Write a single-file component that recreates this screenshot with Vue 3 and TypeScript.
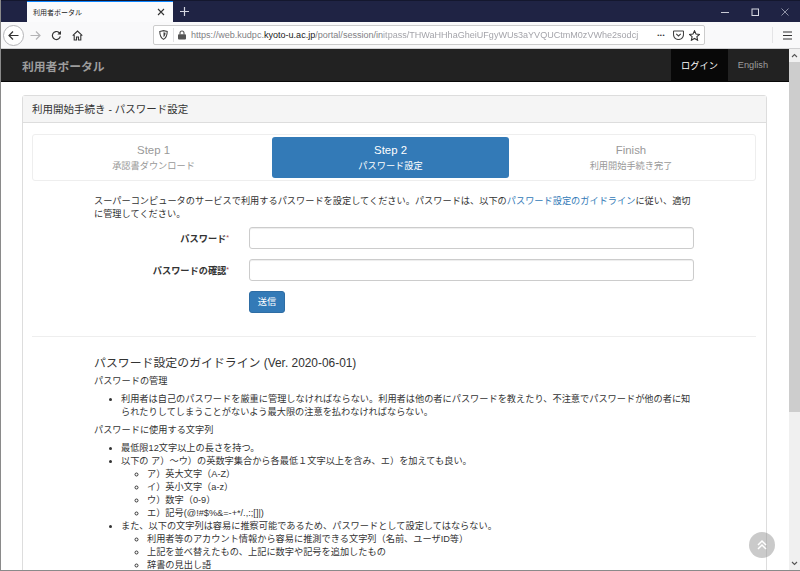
<script setup lang="ts">
const steps = [
  { title: "Step 1", sub: "承認書ダウンロード", active: false },
  { title: "Step 2", sub: "パスワード設定", active: true },
  { title: "Finish", sub: "利用開始手続き完了", active: false },
];
const symbols = ["ア）英大文字（A-Z）", "イ）英小文字（a-z）", "ウ）数字（0-9）", "エ）記号(@!#$%&=-+*/.,:;[]|)"];
const banned = [
  "利用者等のアカウント情報から容易に推測できる文字列（名前、ユーザID等）",
  "上記を並べ替えたもの、上記に数字や記号を追加したもの",
  "辞書の見出し語",
];
</script>

<template>
  <div class="window">
    <div class="titlebar">
      <div class="tab">
        <span class="tab-title">利用者ポータル</span>
        <svg class="tab-close" width="8" height="8" viewBox="0 0 8 8"><path d="M1 1l6 6M7 1L1 7" stroke="#333" stroke-width="1.1" /></svg>
      </div>
      <svg class="new-tab" width="9" height="9" viewBox="0 0 9 9"><path d="M4.500 0v9M0 4.500h9" stroke="#d4d6e0" stroke-width="1.2" /></svg>
      <div class="win-controls">
        <svg width="8" height="8" viewBox="0 0 8 8"><path d="M0 4.500h8" stroke="#c9cbd6" /></svg>
        <svg width="8" height="8" viewBox="0 0 8 8"><rect x="1" y="1" width="6.500" height="6.500" fill="none" stroke="#d8dae2" /></svg>
        <svg width="8" height="8" viewBox="0 0 8 8"><path d="M.5.5l7 7M7.500.5l-7 7" stroke="#8f92a6" /></svg>
      </div>
    </div>

    <div class="toolbar">
      <div class="back">
        <svg width="11" height="11" viewBox="0 0 11 11"><path d="M10.500 5.500H1M5 1.500l-4 4 4 4" fill="none" stroke="#333" stroke-width="1.2" /></svg>
      </div>
      <svg class="forward" width="11" height="11" viewBox="0 0 11 11"><path d="M.5 5.500H10M6 1.500l4 4-4 4" fill="none" stroke="#b4b4b6" stroke-width="1.2" /></svg>
      <svg width="11" height="11" viewBox="0 0 11 11"><path d="M9.300 6.300A4 4 0 1 1 8 2.500L9.500 4" fill="none" stroke="#333" stroke-width="1.2" /><path d="M10 .8v3.600H6.400z" fill="#333" /></svg>
      <svg width="11" height="11" viewBox="0 0 11 11"><path d="M.7 5.600 5.500 1l4.800 4.600M2.200 5v5h2.300V7h2v3h2.300V5" fill="none" stroke="#333" stroke-width="1.1" /></svg>
      <div class="urlbar">
        <svg class="shield" width="9" height="10" viewBox="0 0 9 10"><path d="M.8 1.500 4.500.6l3.700.9c0 3.400-.8 6.200-3.700 7.900C1.600 7.700.8 4.900.8 1.500z" fill="none" stroke="#444" stroke-width="1.100" /><path d="M4.500 2.200l2 .5c0 2-.5 3.400-2 4.500z" fill="#444" /></svg>
        <span class="url-sep"></span>
        <svg class="lock" width="8" height="10" viewBox="0 0 8 10"><path d="M2 4.500V3a2 2 0 0 1 4 0v1.500" fill="none" stroke="#555" stroke-width="1.100" /><rect y="4.200" width="8" height="5.300" rx="1" fill="#555" /></svg>
        <span class="url">https://web.kudpc.<b>kyoto-u.ac.jp</b>/portal/session/in</span>
        <span class="url-blur">itpass/THWaHHhaGheiUFgyWUs3aYVQUCtmM0zVWhe2sodcj</span>
        <span class="url-dots">•••</span>
        <svg width="11" height="10" viewBox="0 0 11 10"><path d="M1 1h9a.5.5 0 0 1 .5.5V4.500a5 5 0 0 1-10 0V1.500A.5.5 0 0 1 1 1z" fill="none" stroke="#444" stroke-width="1.100" /><path d="M3.200 3.800 5.500 6l2.300-2.200" fill="none" stroke="#444" stroke-width="1.100" /></svg>
        <svg width="11" height="11" viewBox="0 0 11 11"><path d="M5.500.8 7 4l3.500.4-2.600 2.300.7 3.500-3.100-1.800-3.100 1.800.7-3.500L.5 4.400 4 4z" fill="none" stroke="#333" stroke-width="1.100" /></svg>
      </div>
      <span class="tool-sep"></span>
      <svg class="menu" width="9" height="9" viewBox="0 0 9 9"><path d="M0 1h9M0 4.500h9M0 8h9" stroke="#333" stroke-width="1.200" /></svg>
    </div>

    <div class="viewport">
      <div class="page">
        <nav class="navbar">
          <span class="brand">利用者ポータル</span>
          <div class="nav-links">
            <span class="nav-link current">ログイン</span>
            <span class="nav-link">English</span>
          </div>
        </nav>

        <div class="panel">
          <div class="panel-heading">利用開始手続き - パスワード設定</div>
          <div class="panel-body">
            <div class="steps">
              <div v-for="step in steps" :key="step.title" class="step" :class="{ active: step.active }">
                <div class="step-title">{{ step.title }}</div>
                <div class="step-sub">{{ step.sub }}</div>
              </div>
            </div>

            <div class="narrow">
              <p class="intro">
                スーパーコンピュータのサービスで利用するパスワードを設定してください。パスワードは、以下の<a>パスワード設定のガイドライン</a>に従い、適切に管理してください。
              </p>
              <div class="form-row">
                <label>パスワード<i>*</i></label>
                <input type="password" />
              </div>
              <div class="form-row">
                <label>パスワードの確認<i>*</i></label>
                <input type="password" />
              </div>
              <div class="form-row">
                <span class="label-gap"></span>
                <button type="button">送信</button>
              </div>
            </div>

            <hr />

            <div class="narrow">
              <h3>パスワード設定のガイドライン (Ver. 2020-06-01)</h3>
              <p class="sub-head">パスワードの管理</p>
              <ul>
                <li>利用者は自己のパスワードを厳重に管理しなければならない。利用者は他の者にパスワードを教えたり、不注意でパスワードが他の者に知られたりしてしまうことがないよう最大限の注意を払わなければならない。</li>
              </ul>
              <p class="sub-head">パスワードに使用する文字列</p>
              <ul>
                <li>最低限12文字以上の長さを持つ。</li>
                <li>以下の ア）～ウ）の英数字集合から各最低１文字以上を含み、エ）を加えても良い。
                  <ul>
                    <li v-for="s in symbols" :key="s">{{ s }}</li>
                  </ul>
                </li>
                <li>また、以下の文字列は容易に推察可能であるため、パスワードとして設定してはならない。
                  <ul>
                    <li v-for="b in banned" :key="b">{{ b }}</li>
                  </ul>
                </li>
              </ul>
            </div>
          </div>
        </div>
      </div>

      <div class="to-top">
        <svg width="12" height="12" viewBox="0 0 12 12"><path d="M2 6 6 2l4 4M2 10l4-4 4 4" fill="none" stroke="#fff" stroke-width="1.500" /></svg>
      </div>

      <div class="scrollbar">
        <svg class="arrow" width="7" height="5" viewBox="0 0 7 5"><path d="M1 4l2.500-2.500L6 4" fill="none" stroke="#555" stroke-width="1.100" /></svg>
        <div class="thumb"></div>
        <svg class="arrow" width="7" height="5" viewBox="0 0 7 5"><path d="M1 1l2.500 2.500L6 1" fill="none" stroke="#555" stroke-width="1.100" /></svg>
      </div>
    </div>
  </div>
</template>

<style scoped>
.window {
  width: 800px;
  height: 571px;
  box-sizing: border-box;
  border-left: 1px solid #8a8a8a;
  border-bottom: 1px solid #8a8a8a;
  display: flex;
  flex-direction: column;
  overflow: hidden;
  background: #fff;
  color: #333;
  font-family: "Liberation Sans", "Noto Sans CJK JP", sans-serif;
  font-size: 9.2px;
}

.titlebar {
  height: 22px;
  flex: none;
  display: flex;
  align-items: center;
  background: #1f2344;
  padding-left: 26px;
  border-top: 1px solid #14172e;
  box-sizing: border-box;
}
.tab {
  width: 146px;
  height: 21px;
  box-sizing: border-box;
  align-self: flex-end;
  background: #fbfbfc;
  border-top: 1px solid #0a84ff;
  display: flex;
  align-items: center;
  justify-content: space-between;
  padding: 0 8px 0 6px;
  font-size: 7px;
  color: #222;
}
.new-tab {
  margin-left: 7px;
}
.win-controls {
  margin-left: auto;
  display: flex;
  gap: 22px;
  padding-right: 11px;
}

.toolbar {
  height: 27px;
  flex: none;
  box-sizing: border-box;
  display: flex;
  align-items: center;
  gap: 10px;
  padding: 0 8px 0 2px;
  background: #f9f9fa;
  border-bottom: 1px solid #d0d0d2;
}
.back {
  width: 21px;
  height: 21px;
  box-sizing: border-box;
  border: 1px solid #b5b5b8;
  border-radius: 50%;
  background: #fff;
  display: flex;
  align-items: center;
  justify-content: center;
}
.forward {
  margin-left: -4px;
}
.urlbar {
  margin-left: 60px;
  width: 552px;
  height: 20px;
  box-sizing: border-box;
  background: #fff;
  border: 1px solid #ccc;
  border-radius: 2px;
  display: flex;
  align-items: center;
  padding: 0 4px 0 5px;
  gap: 5px;
  overflow: hidden;
}
.url-sep {
  width: 1px;
  height: 14px;
  background: #e2e2e4;
}
.lock {
  margin-left: -1px;
}
.url {
  font-size: 9.05px;
  color: #7f7f85;
  white-space: nowrap;
}
.url b {
  font-weight: normal;
  color: #1a1a1a;
}
.url-blur {
  flex: 1;
  margin-left: -5px;
  font-size: 9.05px;
  color: #a4a4aa;
  white-space: nowrap;
  overflow: hidden;
  filter: blur(0.7px);
}
.url-dots {
  font-size: 6px;
  color: #333;
  letter-spacing: 0.5px;
  margin-right: 3px;
}
.tool-sep {
  width: 1px;
  height: 16px;
  background: #e4e4e6;
  margin-left: 57px;
}
.menu {
  margin-left: auto;
}

.viewport {
  flex: 1;
  min-height: 0;
  display: flex;
  position: relative;
}
.page {
  flex: 1;
  min-width: 0;
  overflow: hidden;
}

.navbar {
  height: 33px;
  box-sizing: border-box;
  background: #222;
  border-bottom: 1px solid #080808;
  display: flex;
  align-items: stretch;
  justify-content: space-between;
  padding: 0 11px 0 21px;
}
.brand {
  align-self: center;
  font-size: 11.8px;
  font-weight: bold;
  color: #9d9d9d;
}
.nav-links {
  display: flex;
}
.nav-link {
  display: flex;
  align-items: center;
  padding: 0 10px;
  color: #9d9d9d;
}
.nav-link.current {
  background: #080808;
  color: #fff;
}

.panel {
  margin: 12.5px 22px 0 21px;
  border: 1px solid #ddd;
  border-radius: 3px;
}
.panel-heading {
  height: 27.5px;
  box-sizing: border-box;
  padding: 0 9px 1px;
  display: flex;
  align-items: center;
  background: #f5f5f5;
  border-bottom: 1px solid #ddd;
  font-size: 10.5px;
}
.panel-body {
  padding: 11px 10px 0 9px;
}

.steps {
  display: grid;
  grid-template-columns: 237px 237px 1fr;
  padding: 2px;
  border: 1px solid #eee;
  border-radius: 3px;
}
.step {
  height: 41px;
  border-radius: 3px;
  display: flex;
  flex-direction: column;
  align-items: center;
  justify-content: center;
  gap: 2px;
  color: #999;
}
.step-title {
  font-size: 11.4px;
}
.step.active {
  background: #337ab7;
  color: #fff;
}

.narrow {
  margin: 0 62px;
  line-height: 13px;
}
.intro {
  margin: 14px 0 6px;
}
.intro a {
  color: #337ab7;
}
.form-row {
  display: flex;
  align-items: center;
  gap: 20px;
  margin-bottom: 10px;
}
.form-row label {
  width: 135px;
  text-align: right;
  font-weight: bold;
}
.form-row label i {
  color: #a94442;
  font-style: normal;
  font-weight: normal;
  font-size: 7px;
  vertical-align: 2px;
}
.label-gap {
  width: 135px;
}
input {
  flex: 1;
  min-width: 0;
  height: 22px;
  box-sizing: border-box;
  border: 1px solid #ccc;
  border-radius: 3px;
  background: #fff;
  box-shadow: inset 0 1px 1px rgba(0, 0, 0, 0.075);
}
button {
  width: 36px;
  height: 22px;
  padding: 0;
  box-sizing: border-box;
  background: #337ab7;
  border: 1px solid #2e6da4;
  border-radius: 3px;
  color: #fff;
  font: inherit;
}

hr {
  margin: 23px 0 0;
  border: 0;
  border-top: 1px solid #eee;
}
h3 {
  margin: 19px 0 5px;
  font-size: 11.9px;
  font-weight: normal;
  line-height: 14px;
}
.sub-head {
  margin: 0 0 5px;
}
ul {
  margin: 0 0 5px;
  padding-left: 27px;
}
ul ul {
  margin: 0;
  padding-left: 26px;
  list-style-type: circle;
}
.to-top {
  position: absolute;
  right: 25px;
  bottom: 12px;
  width: 26px;
  height: 26px;
  border-radius: 50%;
  background: rgba(150, 150, 150, 0.5);
  display: flex;
  align-items: center;
  justify-content: center;
}
.scrollbar {
  width: 11px;
  flex: none;
  background: #f0f0f0;
  display: flex;
  flex-direction: column;
  align-items: center;
}
.arrow {
  flex: none;
  margin: 4px 0;
}
.thumb {
  width: 100%;
  height: 350px;
  background: #cdcdcd;
  margin-bottom: auto;
}
</style>
